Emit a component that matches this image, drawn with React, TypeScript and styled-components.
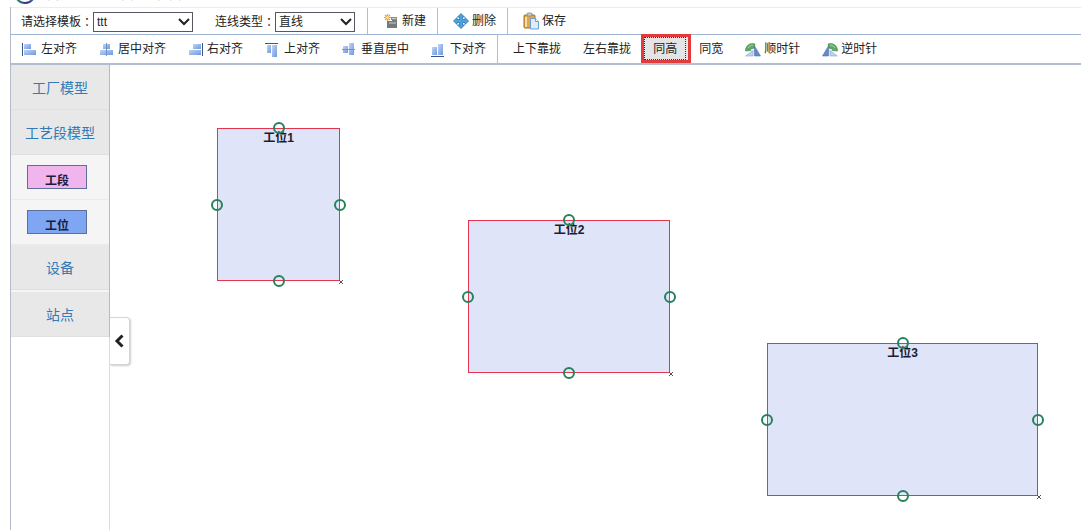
import React from "react";
import styled, { createGlobalStyle } from "styled-components";

const GlobalStyle = createGlobalStyle`
  * { box-sizing: border-box; }
  body {
    margin: 0;
    background: #fff;
    color: #222;
    font: 12px/16px "Liberation Sans", "Noto Sans CJK SC", sans-serif;
  }
  button, select { font: inherit; color: inherit; }
`;

const Page = styled.div`
  display: flex;
  flex-direction: column;
  min-height: 100vh;
  overflow: hidden;
`;

const Header = styled.header`
  display: flex;
  align-items: flex-end;
  gap: 9px;
  height: 7px;
  padding: 0 14px 3px;
`;

const Brand = styled.span`
  display: flex;
  gap: 42px;
  height: 20px;
  font-size: 16px;
  line-height: 20px;
  color: #d4d4d4;
`;

const Shell = styled.div`
  display: flex;
  flex-direction: column;
  flex: 1;
  margin-left: 10px;
  border-left: 1px solid #b4bac8;
`;

const Toolbar = styled.div<{ $strong?: boolean }>`
  display: flex;
  align-items: stretch;
  height: ${(p) => (p.$strong ? 30 : 28)}px;
  border-top: ${(p) => (p.$strong ? "0" : "1px solid #ececf0")};
  border-bottom: ${(p) => (p.$strong ? "2px solid #b3bdcd" : "1px solid #9fb6d4")};
`;

const Field = styled.label`
  display: flex;
  align-items: center;
  padding: 1px 0 0 10px;
  margin-right: 12px;
  white-space: nowrap;
`;

const Colon = styled.span`
  font-family: "Noto Sans CJK TC", sans-serif;
`;

const SelectBox = styled.span<{ $width: number }>`
  position: relative;
  display: flex;
  width: ${(p) => p.$width}px;

  svg {
    position: absolute;
    top: 6px;
    right: 3px;
    pointer-events: none;
  }
`;

const Select = styled.select`
  width: 100%;
  height: 20px;
  padding: 0 3px;
  border: 1px solid #55585e;
  border-radius: 0;
  background: #fff;
  appearance: none;
`;

const ToolButton = styled.button<{ $marked?: boolean }>`
  position: relative;
  display: flex;
  align-items: center;
  gap: 3px;
  padding: 0 11px;
  border: 0;
  background: none;
  white-space: nowrap;

  ${(p) =>
    p.$marked &&
    `
    &::before {
      content: "";
      position: absolute;
      inset: -1px -3px 0 -1px;
      border: 3px solid #e23b3b;
    }
    &::after {
      content: "";
      position: absolute;
      inset: 2px 2px 3px;
      border: 1px dotted #333;
    }
    background: #e4e4e6;
  `}
`;

const Divider = styled.span`
  width: 1px;
  margin-right: 4px;
  background: #a9c1dc;
`;

const Body = styled.div`
  display: flex;
  flex: 1;
`;

const Sidebar = styled.aside`
  width: 99px;
  border-right: 1px solid #dcdcdc;
`;

const Menu = styled.nav`
  display: flex;
  flex-direction: column;
  margin-right: -1px;
  border-right: 1px solid #b9b9b9;
  background: #f5f5f5;
`;

const MenuItem = styled.button<{ $gap?: boolean }>`
  height: 45px;
  margin-top: ${(p) => (p.$gap ? 2 : 0)}px;
  padding: 2px 0 0;
  border: 0;
  border-bottom: 1px solid #e0e0e0;
  background: #e8e8e8;
  color: #337ab7;
  font-size: 14px;
  line-height: 20px;
`;

const PaletteRow = styled.div`
  height: 45px;
  padding: 10px 16px;
  border-bottom: 1px solid #ebebeb;
`;

const Chip = styled.div<{ $color: string }>`
  width: 60px;
  height: 24px;
  padding-top: 8px;
  border: 1px solid #5f6f9c;
  background: ${(p) => p.$color};
  color: #1c1c3a;
  font-weight: bold;
  line-height: 14px;
  text-align: center;
`;

const Canvas = styled.main`
  position: relative;
  flex: 1;
`;

const Handle = styled.button`
  position: absolute;
  top: 252px;
  left: 0;
  display: flex;
  align-items: center;
  justify-content: center;
  width: 20px;
  height: 48px;
  padding: 0 2px 0 0;
  border: 1px solid #d5d5d5;
  border-left: 0;
  border-radius: 0 4px 4px 0;
  background: #fff;
  box-shadow: 1px 1px 2px #ccc;
`;

const Station = styled.div<{ $x: number; $y: number; $w: number }>`
  position: absolute;
  left: ${(p) => p.$x}px;
  top: ${(p) => p.$y}px;
  width: ${(p) => p.$w}px;
  height: 153px;
  padding-top: 2px;
  background: #dfe4f8;
  box-shadow: inset 0 0 0 1px #e0364f;
  color: #1c1c2e;
  font-weight: bold;
  text-align: center;
`;

const Port = styled.span<{ $left: string; $top: string }>`
  position: absolute;
  left: ${(p) => p.$left};
  top: ${(p) => p.$top};
  width: 12px;
  height: 12px;
  margin: -6px;
  border: 2px solid #25825a;
  border-radius: 50%;
`;

const Resize = styled.svg`
  position: absolute;
  right: -3px;
  bottom: -3px;
`;

type Side = "left" | "center" | "right" | "top" | "middle" | "bottom";

const barLayouts: Record<Side, { line: number[]; bars: number[][] }> = {
  left: { line: [0, 2, 1, 13], bars: [[2, 3, 7, 5], [2, 9, 12, 5]] },
  center: { line: [7, 2, 1, 13], bars: [[4, 3, 7, 5], [1, 9, 13, 5]] },
  right: { line: [14, 2, 1, 13], bars: [[5, 3, 8, 5], [1, 9, 12, 5]] },
  top: { line: [0, 2, 13, 1], bars: [[2, 4, 4, 8], [7, 4, 5, 12]] },
  middle: { line: [0, 8, 13, 1], bars: [[1, 5, 5, 7], [7, 2, 5, 12]] },
  bottom: { line: [0, 15, 13, 1], bars: [[1, 6, 5, 8], [7, 3, 5, 11]] },
};

function AlignIcon({ side }: { side: Side }) {
  const { line, bars } = barLayouts[side];
  return (
    <svg width="16" height="16" viewBox="0 0 16 16" aria-hidden="true">
      <defs>
        <linearGradient id={`bar-${side}`} x1="0" y1="0" x2="1" y2="1">
          <stop offset="0" stopColor="#c2d5f4" />
          <stop offset="1" stopColor="#6f98e0" />
        </linearGradient>
      </defs>
      {bars.map(([x, y, w, h]) => (
        <rect key={`${x}-${y}`} x={x} y={y} width={w} height={h} fill={`url(#bar-${side})`} />
      ))}
      <rect
        x={line[0]}
        y={line[1]}
        width={line[2]}
        height={line[3]}
        fill={side === "center" || side === "middle" ? "#6d94cf" : "#39558c"}
      />
    </svg>
  );
}

function NewIcon() {
  return (
    <svg width="16" height="16" viewBox="0 0 16 16" aria-hidden="true">
      <path d="M4 15V8h5V6h5v9z" fill="#77797c" />
      <path d="M8 4h6v3H8z" fill="#8b8d90" />
      <path d="M6 10h7M9 5.500h4" stroke="#c9cacc" />
      <path d="M4.500 1v7M1 4.500h7M2 2l5 5M7 2L2 7" stroke="#e9a13a" strokeWidth="1.200" />
      <circle cx="4.500" cy="4.500" r="1.200" fill="#fff2b8" />
    </svg>
  );
}

function MoveIcon() {
  return (
    <svg width="16" height="16" viewBox="0 0 16 16" aria-hidden="true">
      <path
        d="M8 .5l3.500 3.500H9.500v2.500H12V4.500L15.500 8 12 11.500V9.500H9.500V12h2L8 15.500 4.500 12h2V9.500H4v2L.5 8 4 4.500v2h2.500V4h-2z"
        fill="#4fa3db"
        stroke="#2876b4"
        strokeWidth=".8"
      />
    </svg>
  );
}

function SaveIcon() {
  return (
    <svg width="16" height="18" viewBox="0 0 16 18" aria-hidden="true">
      <rect x="1" y="3" width="11" height="13" rx="1" fill="#e3a64f" stroke="#a56c24" />
      <path d="M3 5v10" stroke="#f7dfa6" strokeWidth="2" />
      <rect x="4" y="1" width="5" height="3" rx="1" fill="#c9c9c9" stroke="#7c7c7c" strokeWidth=".7" />
      <path d="M7.500 6.500h5l3 3v7.500h-8z" fill="#dcecfb" stroke="#6e9fd0" />
      <path d="M12.500 6.500v3h3" fill="#fff" stroke="#6e9fd0" />
    </svg>
  );
}

function RotateIcon({ reverse }: { reverse?: boolean }) {
  return (
    <svg width="16" height="16" viewBox="0 0 16 16" aria-hidden="true">
      <g transform={reverse ? "matrix(-1 0 0 1 16 0)" : undefined}>
        <path d="M9 4L15.500 15H9.500z" fill="#6589c6" stroke="#5575b5" strokeWidth=".6" />
        <path d="M.5 15L8 9.500V15z" fill="#c0cfea" stroke="#8ea6d2" strokeWidth=".6" />
        <path d="M.5 9C1 4.500 5 1.500 10 3l-1 4-4 1.500L6 9.500.5 10z" fill="#62a868" stroke="#3e8550" strokeWidth=".6" />
        <path d="M3 7c1-2 3-3 5-3" fill="none" stroke="#a9d6a6" />
      </g>
    </svg>
  );
}

function Arrow() {
  return (
    <svg width="12" height="8" viewBox="0 0 12 8" aria-hidden="true">
      <path d="M1 1l5 5 5-5" fill="none" stroke="#222" strokeWidth="2" />
    </svg>
  );
}

const alignments: { side: Side; text: string }[] = [
  { side: "left", text: "左对齐" },
  { side: "center", text: "居中对齐" },
  { side: "right", text: "右对齐" },
  { side: "top", text: "上对齐" },
  { side: "middle", text: "垂直居中" },
  { side: "bottom", text: "下对齐" },
];

const stations = [
  { name: "工位1", x: 107, y: 63, w: 123 },
  { name: "工位2", x: 358, y: 155, w: 202 },
  { name: "工位3", x: 657, y: 278, w: 271 },
];

const ports = [
  ["50%", "0%"],
  ["0%", "50%"],
  ["100%", "50%"],
  ["50%", "100%"],
];

export default function App() {
  return (
    <Page>
      <GlobalStyle />
      <Header>
        <svg width="22" height="22" viewBox="0 0 22 22" aria-hidden="true">
          <defs>
            <linearGradient id="ring">
              <stop offset="0" stopColor="#2b9a8c" />
              <stop offset=".6" stopColor="#332a72" />
              <stop offset="1" stopColor="#3279bd" />
            </linearGradient>
          </defs>
          <circle cx="11" cy="11" r="10" fill="none" stroke="url(#ring)" strokeWidth="2" />
        </svg>
        <Brand>
          <span>智造</span>
          <span>管理平台</span>
        </Brand>
      </Header>
      <Shell>
        <Toolbar>
          <Field>
            请选择模板<Colon>：</Colon>
            <SelectBox $width={100}>
              <Select defaultValue="ttt">
                <option>ttt</option>
              </Select>
              <Arrow />
            </SelectBox>
          </Field>
          <Field>
            连线类型<Colon>：</Colon>
            <SelectBox $width={80}>
              <Select defaultValue="直线">
                <option>直线</option>
              </Select>
              <Arrow />
            </SelectBox>
          </Field>
          <Divider />
          <ToolButton>
            <NewIcon />
            新建
          </ToolButton>
          <Divider />
          <ToolButton>
            <MoveIcon />
            删除
          </ToolButton>
          <Divider />
          <ToolButton>
            <SaveIcon />
            保存
          </ToolButton>
        </Toolbar>
        <Toolbar $strong>
          {alignments.map(({ side, text }) => (
            <ToolButton key={side}>
              <AlignIcon side={side} />
              {text}
            </ToolButton>
          ))}
          <Divider />
          <ToolButton>上下靠拢</ToolButton>
          <ToolButton>左右靠拢</ToolButton>
          <ToolButton $marked>同高</ToolButton>
          <ToolButton>同宽</ToolButton>
          <ToolButton>
            <RotateIcon />
            顺时针
          </ToolButton>
          <ToolButton>
            <RotateIcon reverse />
            逆时针
          </ToolButton>
        </Toolbar>
        <Body>
          <Sidebar>
            <Menu>
              <MenuItem>工厂模型</MenuItem>
              <MenuItem>工艺段模型</MenuItem>
              <PaletteRow>
                <Chip $color="#efb5ec">工段</Chip>
              </PaletteRow>
              <PaletteRow>
                <Chip $color="#7ea6f2">工位</Chip>
              </PaletteRow>
              <MenuItem>设备</MenuItem>
              <MenuItem $gap>站点</MenuItem>
            </Menu>
          </Sidebar>
          <Canvas>
            <Handle aria-label="收起">
              <svg width="10" height="14" viewBox="0 0 10 14" aria-hidden="true">
                <path d="M8.500 1.500L3 7l5.500 5.500" fill="none" stroke="#222" strokeWidth="3" />
              </svg>
            </Handle>
            {stations.map((s) => (
              <Station key={s.name} $x={s.x} $y={s.y} $w={s.w}>
                {s.name}
                {ports.map(([left, top]) => (
                  <Port key={left + top} $left={left} $top={top} />
                ))}
                <Resize width="4" height="4" viewBox="0 0 4 4" aria-hidden="true">
                  <path d="M0 0l4 4M4 0L0 4" stroke="#555" />
                </Resize>
              </Station>
            ))}
          </Canvas>
        </Body>
      </Shell>
    </Page>
  );
}
